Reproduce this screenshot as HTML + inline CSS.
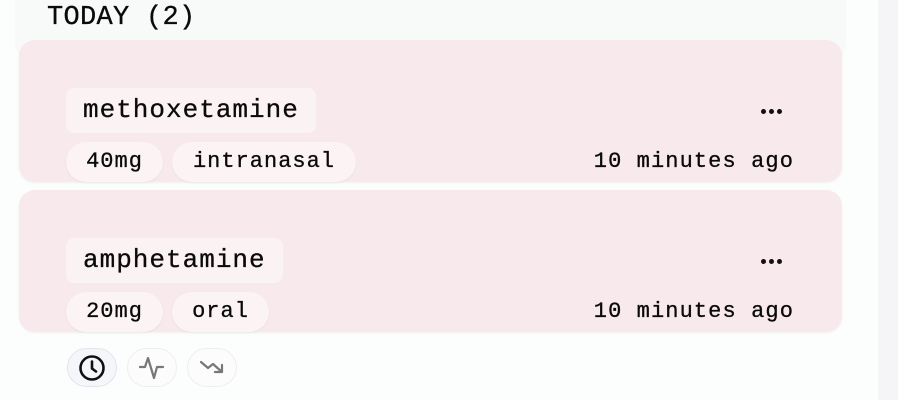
<!DOCTYPE html>
<html><head><meta charset="utf-8"><style>
*{margin:0;padding:0;box-sizing:border-box}
body{width:898px;height:400px;background:#fcfdfd;position:relative;overflow:hidden;font-family:"Liberation Mono","DejaVu Sans Mono",monospace;color:#0a0a0a;-webkit-text-stroke:0.3px #0a0a0a}
.strip{position:absolute;left:878px;top:0;width:20px;height:400px;background:#f5f5f7}
.panel{position:absolute;left:15px;top:-20px;width:831px;height:80px;background:#f8f9f9;border-radius:16px}
.title{position:absolute;left:47px;top:3px;font-size:27px;line-height:30px;letter-spacing:0.3px}
.card{position:absolute;left:19px;width:823px;height:142px;background:#f8e9ec;border-radius:16px;box-shadow:0 1px 2px rgba(0,0,0,.05)}
.name{position:absolute;left:47px;top:48px;height:45px;padding:0 17px;background:#fbf2f4;border-radius:8px;font-size:26px;line-height:45px;letter-spacing:1px}
.chip{position:absolute;top:102px;height:40px;background:#fcf3f5;border-radius:20px;font-size:22px;line-height:40px;letter-spacing:1px;text-align:center;box-shadow:0 1px 2px rgba(0,0,0,.05)}
.time{position:absolute;right:48px;top:102px;font-size:22px;line-height:40px;letter-spacing:1.1px}
.dots{position:absolute;left:742px;top:58px;font-size:20px}
.dots i{display:inline-block;width:5px;height:5px;background:#111;border-radius:50%;margin-right:3px}
.btn{position:absolute;top:348px;width:50px;height:39px;border-radius:20px;border:1.5px solid #eeeef0;background:#fcfcfd;display:flex;align-items:center;justify-content:center}
</style></head><body>
<div class="strip"></div>
<div class="panel"></div>
<div class="title">TODAY (2)</div>
<div class="card" style="top:40px">
 <div class="name">methoxetamine</div>
 <div class="dots"><i></i><i></i><i></i></div>
 <div class="chip" style="left:47px;width:97px">40mg</div>
 <div class="chip" style="left:153px;width:184px">intranasal</div>
 <div class="time">10 minutes ago</div>
</div>
<div class="card" style="top:190px">
 <div class="name">amphetamine</div>
 <div class="dots"><i></i><i></i><i></i></div>
 <div class="chip" style="left:47px;width:97px">20mg</div>
 <div class="chip" style="left:153px;width:97px">oral</div>
 <div class="time">10 minutes ago</div>
</div>
<div class="btn" style="left:67px;background:#f5f6f9;border-color:#e3e4ea"><svg width="28" height="28" viewBox="0 0 28 28"><circle cx="14" cy="14" r="11.5" fill="none" stroke="#111" stroke-width="2.6"/><path d="M14 7.5V14.5L18 17.5" fill="none" stroke="#111" stroke-width="2.6" stroke-linecap="round"/></svg></div>
<div class="btn" style="left:127px"><svg width="30" height="30" viewBox="0 0 30 30"><path d="M3 14H8L11 5L17 25L20 14H26" fill="none" stroke="#777" stroke-width="2.2" stroke-linejoin="round" stroke-linecap="round"/></svg></div>
<div class="btn" style="left:187px"><svg width="30" height="30" viewBox="0 0 30 30"><path d="M4 9L11 15L16 11L25 19M25 12V19H18" fill="none" stroke="#777" stroke-width="2.2" stroke-linejoin="round" stroke-linecap="round"/></svg></div>
</body></html>
